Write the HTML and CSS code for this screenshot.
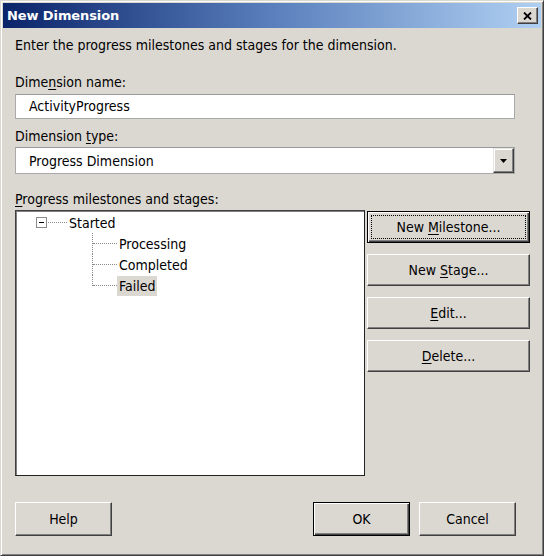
FILE: index.html
```html
<!DOCTYPE html>
<html>
<head>
<meta charset="utf-8">
<link rel="stylesheet" href="styles.css">
</head>
<body>
<div class="window">
  <div class="titlebar">
    <span class="title">New Dimension</span>
    <span class="close"><svg width="9" height="8" viewBox="0 0 9 8"><path d="M1 0.5 L8 7.5 M8 0.5 L1 7.5" stroke="#000" stroke-width="1.8" fill="none"/></svg></span>
  </div>
  <div class="client">
    <div class="intro">Enter the progress milestones and stages for the dimension.</div>
    <div class="label l1">Dime<u>n</u>sion name:</div>
    <div class="textbox">ActivityProgress</div>
    <div class="label l2">Dimension <u>t</u>ype:</div>
    <div class="combo">
      <span class="combo-text">Progress Dimension</span>
      <span class="drop"><svg width="7" height="4" viewBox="0 0 7 4"><path d="M0 0 H7 L3.5 4 Z" fill="#000"/></svg></span>
    </div>
    <div class="label l3"><u>P</u>rogress milestones and stages:</div>
    <div class="row">
      <div class="listbox">
        <div class="root"><span class="exp"><span class="minus"></span></span><span class="conn"></span><span class="lbl">Started</span></div>
        <ul class="children">
          <li><span class="lbl">Processing</span></li>
          <li><span class="lbl">Completed</span></li>
          <li><span class="lbl sel">Failed</span></li>
        </ul>
      </div>
      <div class="actions">
        <div class="btn default"><span class="focus"><span>New <u>M</u>ilestone...</span></span></div>
        <div class="btn"><span>New <u>S</u>tage...</span></div>
        <div class="btn"><span><u>E</u>dit...</span></div>
        <div class="btn"><span><u>D</u>elete...</span></div>
      </div>
    </div>
    <div class="footer">
      <div class="btn wide">Help</div>
      <div class="right">
        <div class="btn wide default">OK</div>
        <div class="btn wide">Cancel</div>
      </div>
    </div>
  </div>
</div>
</body>
</html>
```
FILE: styles.css
```css
html, body {
  margin: 0;
  padding: 0;
  background: #dbd8d2;
}
.window {
  width: 544px;
  height: 556px;
  box-sizing: border-box;
  background: #dbd8d2;
  border: 1px solid;
  border-color: #dbd8d2 #404040 #404040 #dbd8d2;
  box-shadow: inset 1px 1px #ffffff, inset -1px -1px #808080;
  padding: 2px;
  font-family: "DejaVu Sans Condensed", "DejaVu Sans", sans-serif;
  font-size: 14px;
  color: #000;
}
.titlebar {
  height: 25px;
  background: linear-gradient(to right, #0a246a 0%, #5a7fbc 50%, #b0d0f2 100%);
  display: flex;
  align-items: center;
  justify-content: space-between;
  padding: 0 3px 0 4px;
}
.title {
  color: #fff;
  font-weight: bold;
  font-family: "DejaVu Sans", sans-serif;
  font-size: 13px;
  letter-spacing: -0.1px;
}
.close {
  width: 21px;
  height: 17px;
  box-sizing: border-box;
  background: #dbd8d2;
  border: 1px solid;
  border-color: #ffffff #404040 #404040 #ffffff;
  box-shadow: inset -1px -1px #808080;
  display: flex;
  align-items: center;
  justify-content: center;
}
.client {
  display: flex;
  flex-direction: column;
  padding-left: 12px;
}
.intro, .label {
  line-height: 16px;
  height: 16px;
  white-space: nowrap;
}
.intro { margin-top: 9px; }
.l1 { margin-top: 21px; }
.l2 { margin-top: 9px; }
.l3 { margin-top: 17px; }
u { text-decoration-thickness: 1px; text-underline-offset: 2px; }
.textbox {
  margin-top: 4px;
  width: 500px;
  height: 25px;
  box-sizing: border-box;
  background: #fff;
  border: 1px solid #a9a9a9;
  border-top-color: #9a9a9a;
  padding-left: 13px;
  line-height: 23px;
}
.combo {
  margin-top: 3px;
  width: 500px;
  height: 27px;
  box-sizing: border-box;
  background: #fff;
  border: 1px solid #a9a9a9;
  border-top-color: #9a9a9a;
  display: flex;
  align-items: center;
  justify-content: space-between;
  padding-left: 13px;
}
.drop {
  width: 21px;
  height: 25px;
  box-sizing: border-box;
  background: #dbd8d2;
  border: 1px solid;
  border-color: #e8e6e2 #404040 #404040 #e8e6e2;
  box-shadow: inset -1px -1px #808080, inset 1px 1px #ffffff;
  display: flex;
  align-items: center;
  justify-content: center;
}
.row {
  margin-top: 3px;
  display: flex;
  gap: 2px;
}
.listbox {
  width: 350px;
  height: 266px;
  box-sizing: border-box;
  background: #fff;
  border: 1px solid;
  border-color: #404040 #222 #222 #404040;
  box-shadow: inset 1px 1px #808080;
  padding-top: 1px;
}
.root {
  height: 21px;
  display: flex;
  align-items: center;
  padding-left: 20px;
}
.exp {
  width: 11px;
  height: 11px;
  box-sizing: border-box;
  border: 1px solid #8a8a8a;
  background: #fff;
  display: flex;
  align-items: center;
  justify-content: center;
}
.minus {
  width: 5px;
  height: 1px;
  background: #000;
}
.conn {
  width: 19px;
  border-top: 1px dotted #8a8a8a;
  margin-left: 1px;
}
.lbl {
  padding: 0 2px;
  line-height: 20px;
  height: 20px;
}
.children {
  list-style: none;
  margin: 0 0 0 76px;
  padding: 0;
}
.children li {
  position: relative;
  height: 21px;
  padding-left: 25px;
  display: flex;
  align-items: center;
}
.children li::before {
  content: "";
  position: absolute;
  left: 0;
  top: 0;
  bottom: 0;
  border-left: 1px dotted #8a8a8a;
}
.children li:last-child::before {
  bottom: 10px;
}
.children li::after {
  content: "";
  position: absolute;
  left: 1px;
  top: 10px;
  width: 24px;
  border-top: 1px dotted #8a8a8a;
}
.sel {
  background: #dbd8d2;
}
.actions {
  padding-top: 1px;
  display: flex;
  flex-direction: column;
  gap: 11px;
}
.btn {
  width: 163px;
  height: 32px;
  box-sizing: border-box;
  background: #dbd8d2;
  border: 1px solid;
  border-color: #ffffff #404040 #404040 #ffffff;
  box-shadow: inset -1px -1px #808080;
  display: flex;
  align-items: center;
  justify-content: center;
  white-space: nowrap;
}
.btn.default {
  border-color: #000;
  box-shadow: inset 1px 1px #ffffff, inset -1px -1px #404040, inset -2px -2px #808080;
}
.focus {
  align-self: stretch;
  flex: 1;
  margin: 3px;
  border: 1px dotted #000;
  display: flex;
  align-items: center;
  justify-content: center;
}
.footer {
  margin-top: 26px;
  width: 501px;
  display: flex;
  justify-content: space-between;
}
.right {
  display: flex;
  gap: 9px;
}
.btn.wide {
  width: 97px;
  height: 34px;
}
```
